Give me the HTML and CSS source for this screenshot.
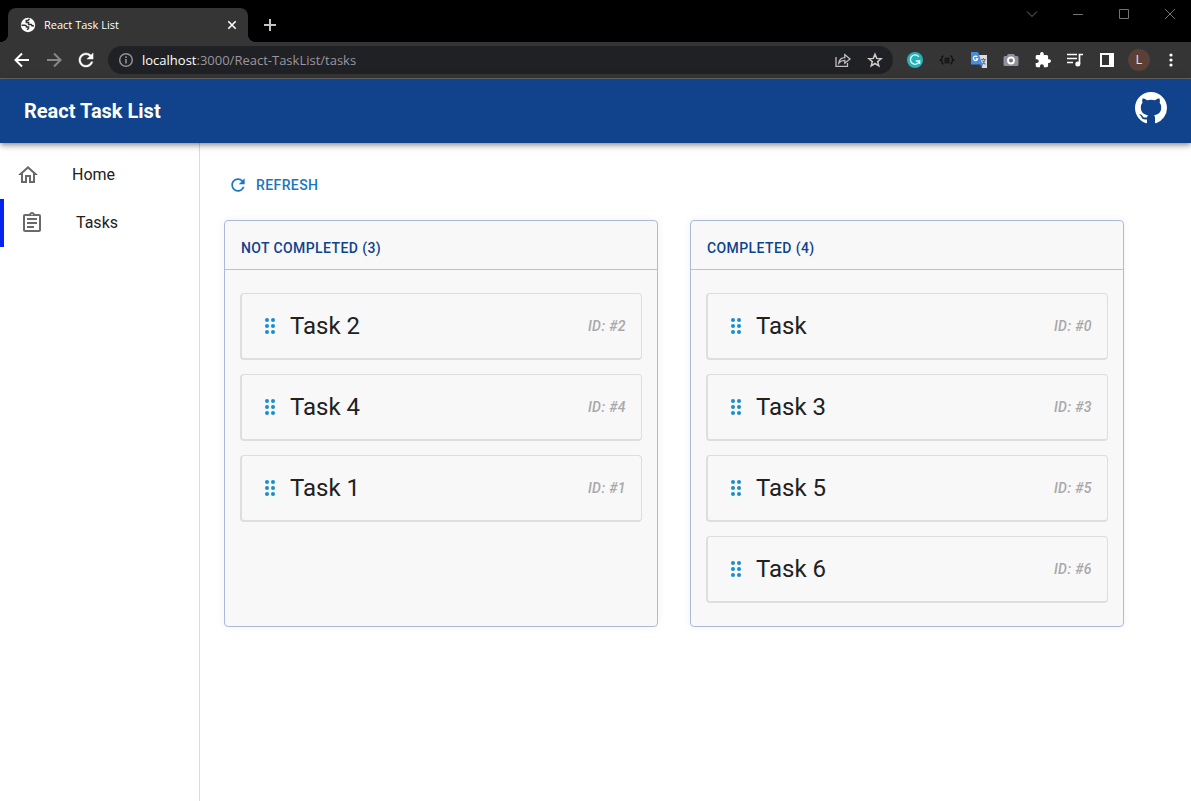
FILE: index.html
```html
<!DOCTYPE html>
<html lang="en">
<head>
<meta charset="utf-8">
<meta name="viewport" content="width=device-width, initial-scale=1">
<title>React Task List</title>
<link rel="stylesheet" href="styles.css">
</head>
<body>
<div class="window">
  <div class="tabstrip">
    <div class="tab">
      <svg class="i16" viewBox="0 0 16 16"><circle cx="8" cy="8" r="7.200" fill="#fff"/><path d="M1.500 8.300H4.800Q6.500 8.300 6.500 10H8.500V11.500L7 12.800M9.500 1.800 8 3.400H6.300V5.600H8.600V7.600H11.300L12.200 9 14 8.600" fill="none" stroke="#353535" stroke-width="1.500"/></svg>
      <span class="tab-title">React Task List</span>
      <button class="plain" aria-label="Close tab"><svg class="i16" viewBox="0 0 16 16"><path d="M4.300 4.300l7.400 7.400M11.700 4.300l-7.400 7.400" stroke="#fff" stroke-width="1.600"/></svg></button>
    </div>
    <button class="plain new-tab" aria-label="New tab"><svg class="i16" viewBox="0 0 16 16"><path d="M8 2v12M2 8h12" stroke="#c4c4c4" stroke-width="2"/></svg></button>
    <div class="controls">
      <button class="plain" aria-label="Search tabs"><svg class="i16" viewBox="0 0 16 16"><path d="M3 5.500l5 5 5-5" fill="none" stroke="#737373"/></svg></button>
      <button class="plain" aria-label="Minimize"><svg class="i16" viewBox="0 0 16 16"><path d="M3 8.500h10" stroke="#737373"/></svg></button>
      <button class="plain" aria-label="Maximize"><svg class="i16" viewBox="0 0 16 16"><path d="M3.500 3.500h9v9h-9z" fill="none" stroke="#737373"/></svg></button>
      <button class="plain" aria-label="Close"><svg class="i16" viewBox="0 0 16 16"><path d="M3 3l10 10M13 3L3 13" stroke="#737373"/></svg></button>
    </div>
  </div>

  <div class="toolbar">
    <button class="plain" aria-label="Back"><svg class="i16" viewBox="0 0 16 16"><path d="M15 8H2M8 1.500L1.500 8 8 14.500" fill="none" stroke="#fff" stroke-width="2"/></svg></button>
    <button class="plain" aria-label="Forward"><svg class="i16" viewBox="0 0 16 16"><path d="M1 8h13M8 1.500L14.500 8 8 14.500" fill="none" stroke="#8a868a" stroke-width="2"/></svg></button>
    <button class="plain" aria-label="Reload"><svg class="i16" viewBox="3 3 18 18"><path fill="#fff" stroke="#fff" stroke-width=".4" d="M17.650 6.350C16.200 4.900 14.210 4 12 4c-4.420 0-7.990 3.580-7.990 8s3.570 8 7.990 8c3.730 0 6.840-2.550 7.730-6h-2.080c-.82 2.330-3.040 4-5.650 4-3.310 0-6-2.690-6-6s2.690-6 6-6c1.660 0 3.140.69 4.220 1.780L13 11h7V4l-2.350 2.350z"/></svg></button>
    <div class="omnibox">
      <svg class="i16" viewBox="0 0 16 16"><circle cx="8" cy="8" r="6.300" fill="none" stroke="#938f98" stroke-width="1.500"/><path d="M8 7v4.500M8 4.300v1.600" stroke="#938f98" stroke-width="1.600"/></svg>
      <p class="url"><b>localhost</b>:3000/React-TaskList/tasks</p>
      <button class="plain" aria-label="Share"><svg class="i16" viewBox="0 0 16 16"><path d="M1 5v9.300h11.500V11M3.800 11c.5-3.600 2.700-5.300 6-5.400V2.600L15 7l-5.200 4.200V8.400c-2.800 0-4.500.8-6 2.600z" fill="none" stroke="#c3bfc0" stroke-width="1.300"/></svg></button>
      <button class="plain" aria-label="Bookmark"><svg class="i16" viewBox="0 0 16 16"><path d="M8 2.200l1.700 4.200 4.400.3-3.400 2.900 1.100 4.300L8 11.500l-3.800 2.400 1.100-4.300L1.900 6.700l4.400-.3z" fill="none" stroke="#d0cbcb" stroke-width="1.500"/></svg></button>
    </div>
    <div class="extensions">
      <button class="plain" aria-label="Grammar"><svg class="i16" viewBox="0 0 16 16"><circle cx="8" cy="8" r="8" fill="#24b2b8"/><path d="M11.800 4.700A4.700 4.700 0 1 0 12.600 9H8.800M12.600 9v3" fill="none" stroke="#e4f8f7" stroke-width="1.400"/></svg></button>
      <button class="plain" aria-label="JSON"><svg class="i16" viewBox="0 0 16 16"><path d="M4.500 4Q3 4 3 5.500T1.500 8Q3 8 3 10t1.500 2M11.500 4Q13 4 13 5.500T14.500 8Q13 8 13 10t-1.500 2M5.500 6.500h5M5.500 8.500h5M5.500 10.500h5" fill="none" stroke="#111" stroke-width="1.300"/></svg></button>
      <button class="plain" aria-label="Translate"><svg class="i16" viewBox="0 0 16 16"><path d="M6 3h10v13h-5z" fill="#d9dce3"/><path d="M10 7.500h5M12.500 6v1.500M14 8q-1 3-3 4.500M11.500 8.500q1 2.500 3 4" fill="none" stroke="#6f7a91" stroke-width="1.100"/><path d="M0 0h7l4.500 12.500H0z" fill="#448de0"/><path d="M8 12.500h3.500L11 16z" fill="#2f65c0"/><path d="M6.300 4.900A2.200 2.200 0 1 0 6.700 7H4.800" fill="none" stroke="#fff" stroke-width="1.300"/></svg></button>
      <button class="plain" aria-label="Screenshot"><svg class="i16" viewBox="0 0 16 16"><path d="M5 2h6l1.200 2H14q1.500 0 1.500 1.500v7Q15.500 14 14 14H2Q.5 14 .5 12.500v-7Q.5 4 2 4h1.800z" fill="#918f9c"/><circle cx="8" cy="8.500" r="3" fill="#777" stroke="#fff" stroke-width="1.800"/></svg></button>
      <button class="plain" aria-label="Extensions"><svg class="i16" viewBox="1 1 22 22"><path fill="#fff" d="M20.500 11H19V7c0-1.100-.9-2-2-2h-4V3.500a2.500 2.500 0 0 0-5 0V5H4c-1.100 0-2 .9-2 2v3.800h1.500a2.700 2.700 0 0 1 0 5.400H2V20c0 1.100.9 2 2 2h3.800v-1.500a2.700 2.700 0 0 1 5.400 0V22H17c1.100 0 2-.9 2-2v-4h1.500a2.500 2.500 0 0 0 0-5z"/></svg></button>
      <button class="plain" aria-label="Media"><svg class="i16" viewBox="0 0 16 16"><path d="M0 2.500h10M0 6.500h10M0 10.500h6M12.500 12V2.500H16" fill="none" stroke="#fff" stroke-width="1.700"/><circle cx="10.800" cy="12" r="2.500" fill="#fff"/></svg></button>
      <button class="plain" aria-label="Side panel"><svg class="i16" viewBox="0 0 16 16"><path fill="#fff" fill-rule="evenodd" d="M1 1h14v14H1zM3 3v10h7V3z"/></svg></button>
      <button class="avatar" aria-label="Profile L">L</button>
      <button class="plain" aria-label="Menu"><svg class="i16" viewBox="0 0 16 16" fill="#fff"><circle cx="8" cy="3" r="1.600"/><circle cx="8" cy="8" r="1.600"/><circle cx="8" cy="13" r="1.600"/></svg></button>
    </div>
  </div>

  <header class="appbar">
    <h1>React Task List</h1>
    <a class="github" href="#" aria-label="GitHub"><svg viewBox="0 0 16 16"><path fill="#fff" d="M8 0C3.580 0 0 3.580 0 8c0 3.540 2.290 6.530 5.470 7.590.4.07.55-.17.55-.38 0-.19-.01-.82-.01-1.490-2.010.37-2.530-.49-2.690-.94-.09-.23-.48-.94-.82-1.130-.28-.15-.68-.52-.01-.53.63-.01 1.080.58 1.230.82.72 1.210 1.870.87 2.330.66.07-.52.28-.87.51-1.070-1.780-.2-3.640-.89-3.640-3.950 0-.87.31-1.590.82-2.150-.08-.2-.36-1.020.08-2.120 0 0 .67-.21 2.200.82.64-.18 1.320-.27 2-.27s1.360.09 2 .27c1.530-1.040 2.200-.82 2.200-.82.44 1.100.16 1.920.08 2.120.51.56.82 1.270.82 2.150 0 3.070-1.870 3.750-3.650 3.950.29.25.54.73.54 1.480 0 1.070-.01 1.930-.01 2.200 0 .21.15.46.55.38A8.013 8.013 0 0 0 16 8c0-4.420-3.580-8-8-8z"/></svg></a>
  </header>

  <div class="body">
    <nav class="sidebar">
      <a class="nav-item" href="#"><svg class="i24" viewBox="0 0 24 24"><path fill="#6b696d" d="M12 5.690l5 4.500V18h-2v-6H9v6H7v-7.810l5-4.500M12 3L2 12h3v8h6v-6h2v6h6v-8h3z"/></svg>Home</a>
      <a class="nav-item active" href="#" aria-current="page"><svg class="i24" viewBox="0 0 24 24"><path fill="#6b696d" d="M7 15h7v2H7zm0-4h10v2H7zm0-4h10v2H7zm12-4h-4.180C14.400 1.840 13.300 1 12 1s-2.400.84-2.820 2H5c-1.100 0-2 .9-2 2v14c0 1.100.9 2 2 2h14c1.100 0 2-.9 2-2V5c0-1.100-.9-2-2-2zm-7-.25c.41 0 .75.34.75.75s-.34.75-.75.75-.75-.34-.75-.75.34-.75.75-.75zM19 19H5V5h14v14z"/></svg>Tasks</a>
    </nav>
    <main class="content">
      <button class="refresh"><svg class="i20" viewBox="0 0 24 24"><path fill="#1976c0" d="M17.650 6.350C16.200 4.900 14.210 4 12 4c-4.420 0-7.990 3.580-7.990 8s3.570 8 7.990 8c3.730 0 6.840-2.550 7.730-6h-2.080c-.82 2.330-3.040 4-5.650 4-3.310 0-6-2.690-6-6s2.690-6 6-6c1.660 0 3.140.69 4.220 1.780L13 11h7V4l-2.350 2.350z"/></svg>REFRESH</button>
      <svg width="0" height="0" class="defs"><symbol id="grip" viewBox="0 0 24 24"><g fill="#188fca"><circle cx="9" cy="6" r="2"/><circle cx="15" cy="6" r="2"/><circle cx="9" cy="12" r="2"/><circle cx="15" cy="12" r="2"/><circle cx="9" cy="18" r="2"/><circle cx="15" cy="18" r="2"/></g></symbol></svg>
      <div class="board">
        <section class="column">
          <h2>NOT COMPLETED (3)</h2>
          <ul class="cards">
            <li class="card"><svg class="i24"><use href="#grip"/></svg><span class="name">Task 2</span><span class="id">ID: #2</span></li>
            <li class="card"><svg class="i24"><use href="#grip"/></svg><span class="name">Task 4</span><span class="id">ID: #4</span></li>
            <li class="card"><svg class="i24"><use href="#grip"/></svg><span class="name">Task 1</span><span class="id">ID: #1</span></li>
          </ul>
        </section>
        <section class="column">
          <h2>COMPLETED (4)</h2>
          <ul class="cards">
            <li class="card"><svg class="i24"><use href="#grip"/></svg><span class="name">Task</span><span class="id">ID: #0</span></li>
            <li class="card"><svg class="i24"><use href="#grip"/></svg><span class="name">Task 3</span><span class="id">ID: #3</span></li>
            <li class="card"><svg class="i24"><use href="#grip"/></svg><span class="name">Task 5</span><span class="id">ID: #5</span></li>
            <li class="card"><svg class="i24"><use href="#grip"/></svg><span class="name">Task 6</span><span class="id">ID: #6</span></li>
          </ul>
        </section>
      </div>
    </main>
  </div>
</div>
</body>
</html>
```

FILE: styles.css
```css
* { box-sizing: border-box; }

body {
  margin: 0;
  background: #fff;
  color: #212121;
  font-family: Roboto, "Liberation Sans", sans-serif;
  font-size: 16px;
}

h1, h2, p, ul { margin: 0; padding: 0; }
ul { list-style: none; }
a { color: inherit; text-decoration: none; }
button { font: inherit; border: 0; background: none; padding: 0; }
svg { display: block; flex: none; }

.window { display: flex; flex-direction: column; min-height: 100vh; }
.plain { display: flex; flex: none; }
.i16 { width: 16px; height: 16px; }
.i20 { width: 20px; height: 20px; }
.i24 { width: 24px; height: 24px; }
.defs { position: absolute; }

/* Browser frame */
.tabstrip {
  display: flex;
  align-items: flex-start;
  padding: 8px 13px 0 8px;
  background: #000;
}
.tab {
  position: relative;
  display: flex;
  align-items: center;
  gap: 8px;
  width: 240px;
  height: 34px;
  padding: 0 8px 0 12px;
  border-radius: 8px 8px 0 0;
  background: #353535;
  color: #fff;
  font: 11px/16px "Open Sans", "Noto Sans", sans-serif;
}
.tab::before, .tab::after {
  content: "";
  position: absolute;
  bottom: 0;
  width: 8px;
  height: 8px;
}
.tab::before { right: 100%; background: radial-gradient(circle at 0 0, #000 8px, #353535 8px); }
.tab::after { left: 100%; background: radial-gradient(circle at 100% 0, #000 8px, #353535 8px); }
.tab-title { flex: 1; }
.new-tab { margin: 9px 0 0 14px; }
.controls { display: flex; gap: 30px; margin-top: -2px; margin-left: auto; }

.toolbar {
  display: flex;
  align-items: center;
  gap: 16px;
  height: 37px;
  padding: 0 12px 0 14px;
  border-bottom: 1px solid #656565;
  background: #353535;
}
.omnibox {
  display: flex;
  flex: 1;
  align-items: center;
  gap: 16px;
  height: 28px;
  margin-left: -2px;
  padding: 0 10px;
  border-radius: 14px;
  background: #202125;
}
.url {
  flex: 1;
  margin-left: -8px;
  color: #9a969e;
  font: 13px/20px "Open Sans", "Noto Sans", sans-serif;
}
.url b { color: #fff; font-weight: 400; }
.extensions { display: flex; align-items: center; gap: 16px; margin-left: -2px; }
.avatar {
  width: 22px;
  height: 22px;
  margin: 0 -3px;
  border-radius: 50%;
  background: #5b4037;
  color: #e6dfdf;
  font-size: 12px;
  line-height: 22px;
  text-align: center;
}

/* Application */
.appbar {
  position: relative;
  display: flex;
  align-items: center;
  justify-content: space-between;
  height: 64px;
  padding: 0 24px;
  background: #11438c;
  color: #fff;
  box-shadow: 0 2px 4px -1px rgba(0, 0, 0, .3), 0 4px 5px rgba(0, 0, 0, .14), 0 1px 10px rgba(0, 0, 0, .12);
}
.appbar h1 { font-size: 20px; font-weight: 700; line-height: 32px; }
.github { padding-bottom: 6px; }
.github svg { width: 32px; height: 32px; }

.body { display: flex; flex: 1; }
.sidebar {
  flex: none;
  width: 200px;
  padding-top: 8px;
  border-right: 1px solid #dcdcdc;
}
.nav-item {
  display: flex;
  align-items: center;
  gap: 32px;
  height: 48px;
  padding: 0 16px;
  line-height: 24px;
}
.active { border-left: 4px solid #0223f0; }

.content { flex: 1; min-width: 0; padding: 24px; }
.refresh {
  display: flex;
  align-items: center;
  gap: 8px;
  height: 36px;
  padding: 0 4px;
  color: #1976c0;
  font-size: 14px;
  font-weight: 500;
  letter-spacing: .02857em;
}
.board {
  display: grid;
  grid-template-columns: 1fr 1fr;
  gap: 32px;
  max-width: 900px;
  margin-top: 17px;
}
.column {
  border: 1px solid #adbbd8;
  border-radius: 4px;
  background: #f8f8f8;
  box-shadow: 0 0 8px rgba(0, 0, 0, .06);
}
.column h2 {
  padding: 15px 16px 9px;
  border-bottom: 1px solid #bfc2c9;
  color: #11438c;
  font-size: 14px;
  font-weight: 500;
  line-height: 24px;
  letter-spacing: .02857em;
}
.cards {
  display: flex;
  flex-direction: column;
  gap: 14px;
  padding: 23px 15px;
}
.card {
  display: flex;
  align-items: center;
  height: 67px;
  padding: 0 15px 0 16px;
  border: solid #dedede;
  border-width: 1px 1px 2px 2px;
  border-radius: 4px;
}
.name { flex: 1; margin-left: 8px; font-size: 24px; line-height: 32px; }
.id {
  color: #a8a8a8;
  font-size: 14px;
  font-style: italic;
  font-weight: 500;
  line-height: 20px;
  letter-spacing: .02857em;
}
```
